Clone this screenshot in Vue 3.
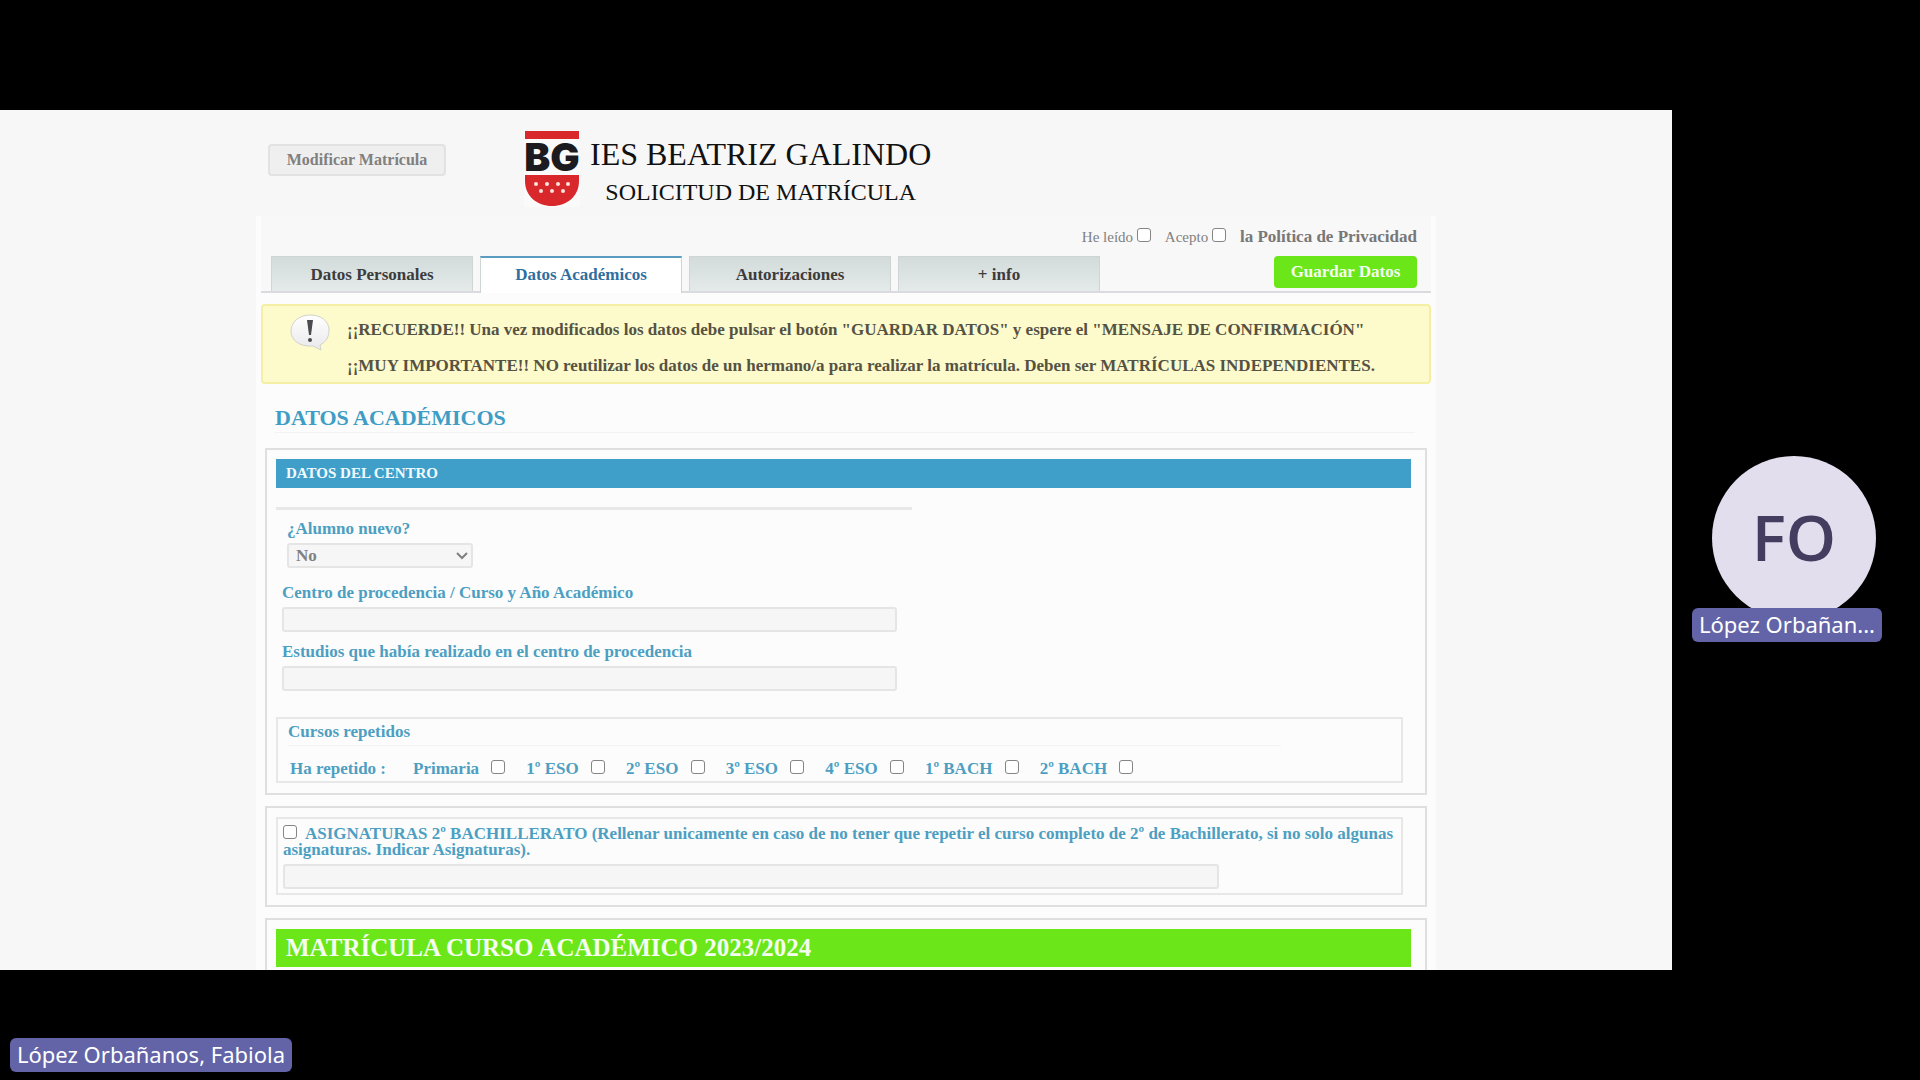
<script setup>
import { ref } from 'vue'

const tabs = ['Datos Personales', 'Datos Académicos', 'Autorizaciones', '+ info']
const activeTab = ref('Datos Académicos')

const cursos = ['Primaria', '1º ESO', '2º ESO', '3º ESO', '4º ESO', '1º BACH', '2º BACH']
const repetidos = ref([])

const leido = ref(false)
const acepto = ref(false)
const alumnoNuevo = ref('No')
const centro = ref('')
const estudios = ref('')
const soloAlgunas = ref(false)
const asignaturas = ref('')

// dots of the shield: two rows
const dots = [[12, 53], [23, 53], [34, 53], [44, 53], [17, 60], [28, 60], [39, 60]]
</script>

<template>
  <div class="meeting">
    <main class="shared">
      <div class="page">
        <header class="page-header">
          <button type="button" class="btn-modify">Modificar Matrícula</button>
          <div class="brand">
            <svg class="shield" viewBox="0 0 56 76" aria-hidden="true">
              <rect x="0" y="0" width="56" height="76" fill="#fcfcfc" opacity="0.6" />
              <rect x="1" y="0" width="54" height="8" fill="#d9282c" />
              <text x="28" y="40" text-anchor="middle" class="shield-text">BG</text>
              <path d="M1 44H55V50C55 65 43 75 28 75C13 75 1 65 1 50Z" fill="#d9282c" />
              <circle v-for="(d, i) in dots" :key="i" :cx="d[0]" :cy="d[1]" r="2" fill="#fbe3dc" />
            </svg>
            <div class="brand-text">
              <h1>IES BEATRIZ GALINDO</h1>
              <p>SOLICITUD DE MATRÍCULA</p>
            </div>
          </div>
        </header>

        <div class="sheet">
          <div class="top">
            <div class="privacy">
              <label>He leído <input v-model="leido" type="checkbox" /></label>
              <label>Acepto <input v-model="acepto" type="checkbox" /></label>
              <a href="#">la Política de Privacidad</a>
            </div>
            <div class="tab-bar">
              <nav class="tabs">
                <a
                  v-for="tab in tabs"
                  :key="tab"
                  href="#"
                  :class="{ active: tab === activeTab }"
                  @click.prevent="activeTab = tab"
                >{{ tab }}</a>
              </nav>
              <button type="button" class="btn-save">Guardar Datos</button>
            </div>
          </div>

          <div class="notice">
            <svg class="bubble" viewBox="0 0 42 38" aria-hidden="true">
              <defs>
                <linearGradient id="bubbleFill" x1="0" y1="0" x2="0" y2="1">
                  <stop offset="0" stop-color="#ffffff" />
                  <stop offset="1" stop-color="#e9e9ec" />
                </linearGradient>
              </defs>
              <path
                d="M21 1C32 1 40 7 40 16C40 23 37 28 31 31L32 36L24 32C10 33 2 26 2 17C2 8 10 1 21 1Z"
                fill="url(#bubbleFill)"
                stroke="#d2d2cc"
              />
              <path d="M18 6H24L22 21H20Z" fill="#4c4c50" />
              <circle cx="21" cy="26" r="2" fill="#4c4c50" />
            </svg>
            <div class="notice-text">
              <p>¡¡RECUERDE!! Una vez modificados los datos debe pulsar el botón "GUARDAR DATOS" y espere el "MENSAJE DE CONFIRMACIÓN"</p>
              <p>¡¡MUY IMPORTANTE!! NO reutilizar los datos de un hermano/a para realizar la matrícula. Deben ser MATRÍCULAS INDEPENDIENTES.</p>
            </div>
          </div>

          <h2>DATOS ACADÉMICOS</h2>

          <section class="panel">
            <h3 class="bar">DATOS DEL CENTRO</h3>
            <hr class="rule" />
            <div class="field field-select">
              <label for="nuevo">¿Alumno nuevo?</label>
              <div class="select-wrap">
                <select id="nuevo" v-model="alumnoNuevo">
                  <option>No</option>
                  <option>Sí</option>
                </select>
                <svg viewBox="0 0 12 8" aria-hidden="true">
                  <path d="M1 1L6 6L11 1" fill="none" stroke="#808080" stroke-width="2" />
                </svg>
              </div>
            </div>
            <div class="field">
              <label for="centro">Centro de procedencia / Curso y Año Académico</label>
              <input id="centro" v-model="centro" type="text" />
            </div>
            <div class="field">
              <label for="estudios">Estudios que había realizado en el centro de procedencia</label>
              <input id="estudios" v-model="estudios" type="text" />
            </div>

            <div class="box repeated">
              <h4>Cursos repetidos</h4>
              <div class="repeat-row">
                <span class="repeat-title">Ha repetido :</span>
                <label v-for="curso in cursos" :key="curso">
                  {{ curso }}
                  <input v-model="repetidos" type="checkbox" :value="curso" />
                </label>
              </div>
            </div>
          </section>

          <section class="panel">
            <div class="box subjects">
              <label>
                <input v-model="soloAlgunas" type="checkbox" />ASIGNATURAS 2º BACHILLERATO (Rellenar unicamente en caso de no tener que repetir el curso completo de 2º de Bachillerato, si no solo algunas asignaturas. Indicar Asignaturas).
              </label>
              <input v-model="asignaturas" type="text" aria-label="Asignaturas" />
            </div>
          </section>

          <section class="panel">
            <h3 class="bar bar-green">MATRÍCULA CURSO ACADÉMICO 2023/2024</h3>
          </section>
        </div>
      </div>
    </main>

    <aside class="participants">
      <div class="participant">
        <div class="avatar">FO</div>
        <span class="name-tag">López Orbañan...</span>
      </div>
    </aside>

    <footer class="presenter">
      <span class="name-tag">López Orbañanos, Fabiola</span>
    </footer>
  </div>
</template>

<style>
body {
  margin: 0;
  background: #000;
}
</style>

<style scoped>
* {
  box-sizing: border-box;
}

h1,
h2,
h3,
h4,
p {
  margin: 0;
}

.meeting {
  display: grid;
  grid-template-columns: minmax(0, 1fr) 248px;
  grid-template-rows: minmax(0, 1fr) 110px;
  height: 100vh;
  padding-top: 110px;
  background: #000;
}

.shared {
  overflow: hidden;
  padding-left: 20px;
  background: #f7f7f7;
  font-family: Georgia, "Liberation Serif", serif;
  color: #555;
}

.page {
  max-width: 1180px;
  margin: 0 auto;
}

.page-header {
  display: flex;
  align-items: flex-start;
  height: 106px;
  padding: 21px 12px 0;
}

.btn-modify {
  width: 178px;
  height: 32px;
  margin-top: 13px;
  border: 2px solid #e2e2e2;
  border-radius: 4px;
  background: #efefef;
  color: #808080;
  font: bold 16px "Liberation Serif", serif;
}

.brand {
  display: flex;
  gap: 10px;
  margin-left: 78px;
  color: #111;
}

.shield {
  width: 56px;
  height: 76px;
}

.shield-text {
  font: 900 39px Inter, "Liberation Sans", sans-serif;
  fill: #1c1c20;
}

.brand-text {
  padding-top: 4px;
  text-align: center;
}

.brand-text h1 {
  font-size: 32px;
  font-weight: normal;
  line-height: 38px;
}

.brand-text p {
  font-size: 24px;
  line-height: 38px;
}

.sheet {
  padding: 0 5px;
  background: #fcfcfc;
}

.top {
  padding-top: 10px;
  background: #f8f8f8;
}

.privacy {
  display: flex;
  justify-content: flex-end;
  gap: 14px;
  height: 30px;
  padding-right: 14px;
  color: #808080;
  font-size: 15px;
  line-height: 22px;
}

.privacy a {
  color: #777;
  font-size: 17px;
  font-weight: bold;
  text-decoration: none;
}

input[type="checkbox"] {
  appearance: none;
  width: 14px;
  height: 14px;
  margin: 0;
  border: 1px solid #858585;
  border-radius: 3px;
  background: #fff;
}

.tab-bar {
  display: flex;
  justify-content: space-between;
  padding: 0 14px 0 10px;
  border-bottom: 2px solid #dadadf;
}

.tabs {
  display: flex;
  gap: 7px;
}

.tabs a {
  width: 202px;
  height: 35px;
  border: 1px solid #cfd5d5;
  border-bottom: 0;
  background: linear-gradient(#d3dbdb, #e4eae9);
  color: #3c3c3c;
  font-size: 17px;
  font-weight: bold;
  line-height: 35px;
  text-align: center;
  text-decoration: none;
}

.tabs a.active {
  height: 37px;
  margin-bottom: -2px;
  border-top: 2px solid #5a9dc0;
  background: #fff;
  color: #2f6f9f;
  line-height: 34px;
}

.btn-save {
  width: 143px;
  height: 32px;
  border: 0;
  border-radius: 4px;
  background: #6be619;
  color: #f4fff0;
  font: bold 17px "Liberation Serif", serif;
}

.notice {
  display: flex;
  gap: 16px;
  height: 80px;
  margin-top: 11px;
  padding: 8px 0 0 26px;
  border: 2px solid #f3f0a6;
  border-radius: 4px;
  background: #fdfbcb;
}

.bubble {
  width: 42px;
  height: 38px;
}

.notice-text {
  margin-top: -2px;
  color: #555244;
  font-size: 17px;
  font-weight: bold;
  line-height: 36px;
  white-space: nowrap;
}

h2 {
  margin: 20px 16px 0 14px;
  border-bottom: 1px solid #f3f3f3;
  color: #3f9dc5;
  font-size: 22px;
  line-height: 28px;
}

.panel {
  margin: 0 4px 11px;
  padding: 9px 14px 10px 9px;
  border: 2px solid #dfdfdf;
}

h2 + .panel {
  margin-top: 15px;
}

.bar {
  padding-left: 10px;
  background: #409fc9;
  color: #f2fbff;
  font-size: 15px;
  line-height: 29px;
}

.bar-green {
  background: #6be619;
  color: #f4fff0;
  font-size: 25px;
  line-height: 38px;
}

.rule {
  width: 56%;
  height: 3px;
  margin: 19px 0 9px;
  border: 0;
  background: #e8e8e8;
}

.field {
  display: flex;
  flex-direction: column;
  gap: 4px;
  margin-bottom: 10px;
  padding-left: 6px;
  color: #4d9fc2;
  font-size: 17px;
  font-weight: bold;
  line-height: 20px;
}

.field-select {
  margin-bottom: 15px;
  padding-left: 11px;
}

.select-wrap {
  display: grid;
  align-items: center;
  width: 186px;
}

.select-wrap select,
.select-wrap svg {
  grid-area: 1 / 1;
}

.select-wrap svg {
  justify-self: end;
  width: 12px;
  height: 8px;
  margin-right: 5px;
  pointer-events: none;
}

select,
input[type="text"] {
  height: 25px;
  border: 2px solid #e5e5e5;
  border-radius: 3px;
  background: #f6f6f6;
  color: #808080;
  font: bold 17px "Liberation Serif", serif;
}

select {
  appearance: none;
  padding: 0 7px;
}

.field input[type="text"] {
  width: 615px;
}

.box {
  margin-right: 8px;
  border: 2px solid #e8e8e8;
  color: #4d9fc2;
  font-size: 17px;
  font-weight: bold;
}

.repeated {
  height: 66px;
  margin-top: 26px;
  padding: 2px 120px 0 10px;
}

.repeated h4 {
  height: 25px;
  border-bottom: 1px solid #f3f3f3;
  font-size: 17px;
  line-height: 22px;
}

.repeat-row {
  display: flex;
  gap: 21px;
  padding: 12px 0 0 2px;
  line-height: 22px;
  white-space: nowrap;
}

.repeat-title {
  margin-right: 6px;
}

.repeat-row input {
  margin-left: 8px;
}

.subjects {
  padding: 6px 5px 4px 5px;
  line-height: 16px;
}

.subjects label {
  display: block;
}

.subjects input[type="checkbox"] {
  margin-right: 8px;
}

.subjects input[type="text"] {
  display: block;
  width: 936px;
  max-width: 100%;
  margin-top: 6px;
}

.participants {
  display: flex;
  align-items: center;
  justify-content: center;
}

.participant {
  display: flex;
  flex-direction: column;
  align-items: center;
  margin-top: 18px;
  margin-right: 4px;
}

.avatar {
  width: 164px;
  height: 164px;
  border-radius: 50%;
  background: #e2deee;
  color: #453d60;
  font: 600 64px/162px "Open Sans", sans-serif;
  text-align: center;
}

.name-tag {
  padding: 0 7px 2px;
  border-radius: 6px;
  background: #6264a7;
  color: #fff;
  font: 22px/32px "Noto Sans", sans-serif;
  white-space: nowrap;
}

.participant .name-tag {
  margin-top: -12px;
  margin-right: 14px;
}

.presenter {
  grid-column: 1 / -1;
  display: flex;
  align-items: flex-end;
  padding: 0 0 8px 10px;
}
</style>
